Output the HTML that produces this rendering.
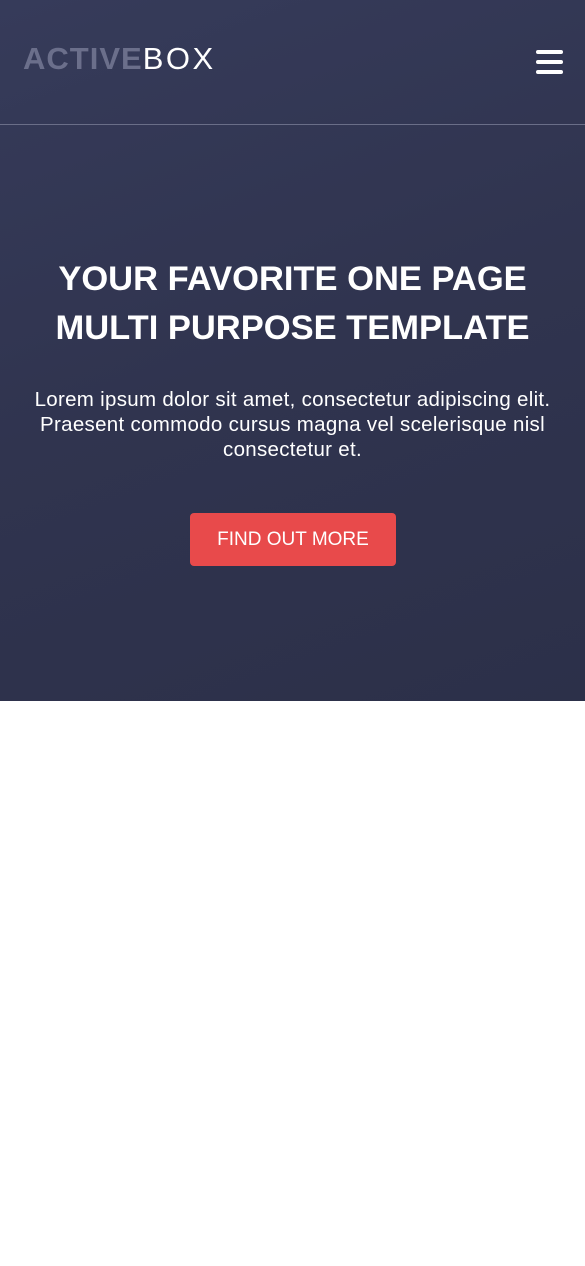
<!DOCTYPE html>
<html><head><style>
body{margin:0;width:585px;height:1266px;background:#fff;font-family:"Liberation Sans",sans-serif;overflow:hidden}
.hero{position:absolute;left:0;top:0;width:585px;height:701px;background:linear-gradient(160deg,#363b5a 0%,#30344f 50%,#2c3049 100%)}
.logo{position:absolute;left:23px;top:43px;font-size:31px;line-height:31px;white-space:nowrap}
.logo b{color:#6b6f8b;font-weight:900;letter-spacing:1px}
.logo span{color:#fff;font-weight:100;letter-spacing:2.5px}
.burger{position:absolute;left:536px;top:50px;width:27px}
.burger div{height:4px;background:#fff;border-radius:2px;margin-bottom:6px}
.line{position:absolute;left:0;top:124px;width:585px;height:1px;background:#6a6e88}
h1{position:absolute;left:0;top:255px;width:585px;margin:0;text-align:center;color:#fff;font-size:34.5px;line-height:49px;font-weight:bold}
p{position:absolute;left:15px;top:387px;width:555px;margin:0;text-align:center;color:#fff;font-size:20.5px;letter-spacing:0.3px;line-height:25px}
.btn{position:absolute;left:190px;top:513px;width:206px;height:53px;background:#e84a4b;border-radius:4px;color:#fff;font-size:19px;line-height:53px;text-align:center}
</style></head><body>
<div class="hero">
<div class="logo"><b>ACTIVE</b><span>BOX</span></div>
<div class="burger"><div></div><div></div><div></div></div>
<div class="line"></div>
<h1>YOUR FAVORITE ONE PAGE<br>MULTI PURPOSE TEMPLATE</h1>
<p>Lorem ipsum dolor sit amet, consectetur adipiscing elit. Praesent commodo cursus magna vel scelerisque nisl consectetur et.</p>
<div class="btn">FIND OUT MORE</div>
</div>
</body></html>
